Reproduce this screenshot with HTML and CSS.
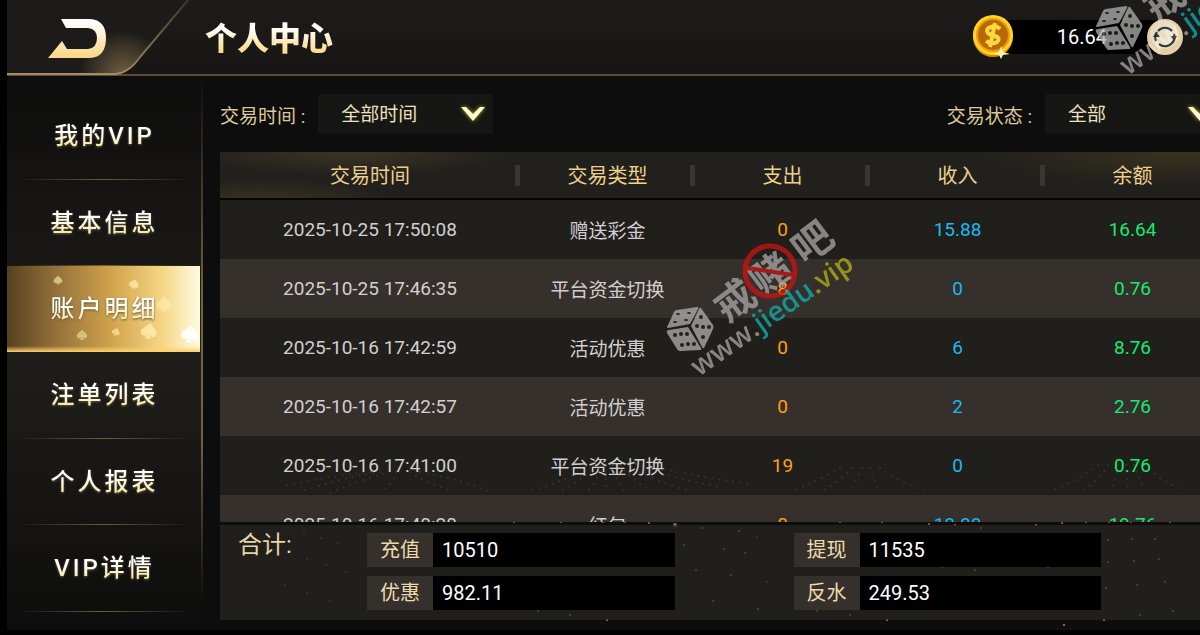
FILE: index.html
```
<!DOCTYPE html>
<html lang="zh-CN">
<head>
  <meta charset="UTF-8">
  <meta name="viewport" content="width=device-width, initial-scale=1">
  <title>个人中心</title>
  <link rel="stylesheet" href="styles.css">
</head>
<body>
  <div class="app">
    <header class="topbar">
      <button class="back" aria-label="返回">
        <svg width="188" height="76" viewBox="0 0 188 76">
          <defs>
            <linearGradient id="gold" x1="0" y1="0" x2="0" y2="1">
              <stop offset="0.1" stop-color="#fff"/>
              <stop offset="0.9" stop-color="#fbd88c"/>
            </linearGradient>
            <linearGradient id="edge" x1="0" y1="1" x2="1" y2="0">
              <stop offset="0.3" stop-color="#a58d63"/>
              <stop offset="1" stop-color="#3a342a"/>
            </linearGradient>
            <radialGradient id="glow" cx="116" cy="74" r="44" gradientUnits="userSpaceOnUse">
              <stop offset="0" stop-color="#8b744e" stop-opacity=".75"/>
              <stop offset="1" stop-color="#8b744e" stop-opacity="0"/>
            </radialGradient>
          </defs>
          <path d="M0 0H181L133 57Q122 73 108 74H0Z" fill="#1c1b19"/>
          <path d="M0 0H181L133 57Q122 73 108 74H0Z" fill="url(#glow)"/>
          <path d="M0 74H108Q122 73 133 57L181 0" fill="none" stroke="url(#edge)" stroke-width="2"/>
          <path d="M54 19H83Q99 20 99 38Q99 57 83 58H41L55 41L60 49H81Q90 48 90 38Q90 29 81 28H59Z" fill="url(#gold)"/>
        </svg>
      </button>
      <h1>个人中心</h1>
      <div class="wallet">
        <svg class="coin" width="44" height="44" viewBox="0 0 44 44">
          <circle cx="23" cy="22" r="20" fill="#d98a00"/>
          <circle cx="23" cy="20" r="20" fill="#ffd42a"/>
          <circle cx="23" cy="20" r="16" fill="#b9670b" stroke="#f29c0a" stroke-width="2"/>
          <path d="M30 14Q26 10 21 12Q15 14 18 18Q20 20 25 21Q31 23 27 27Q22 30 16 26M25 8L20 32" fill="none" stroke="#ffd93c" stroke-width="4"/>
          <path d="M31 31L33 37L40 39L33 40L31 44L29 40L23 39L29 37Z" fill="#fff0ae"/>
        </svg>
        <span class="balance">16.64</span>
        <button class="refresh" aria-label="刷新">
          <svg width="36" height="36" viewBox="0 0 36 36">
            <circle cx="18" cy="18" r="18" fill="#fce3b4"/>
            <circle cx="17" cy="16" r="14" fill="#fff5df"/>
            <path d="M11 12A9 9 0 0 1 25 12M27 15A9 9 0 0 1 24 25M25 24A9 9 0 0 1 12 25M9 22A9 9 0 0 1 10 13" fill="none" stroke="#3a3a38" stroke-width="2"/>
            <path d="M6 18L9 13L13 18ZM24 17L30 17L27 22Z" fill="#3a3a38"/>
          </svg>
        </button>
      </div>
    </header>

    <div class="main">
      <nav class="side">
        <a href="#"><span>我的VIP</span></a>
        <a href="#"><span>基本信息</span></a>
        <a href="#" class="active">
          <svg class="spades" viewBox="0 0 193 86" preserveAspectRatio="none">
            <defs>
              <path id="spade" d="M0 -8C3 -4 8 -2 8 2C8 6 3 7 1 4L3 8H-3L-1 4C-3 7 -8 6 -8 2C-8 -2 -3 -4 0 -8Z"/>
            </defs>
            <g fill="#fff3b5">
              <use href="#spade" transform="translate(51 14) scale(.55)" opacity=".6"/>
              <use href="#spade" transform="translate(127 18) rotate(15) scale(.6)" opacity=".7"/>
              <use href="#spade" transform="translate(157 38) scale(.95)" opacity=".55"/>
              <use href="#spade" transform="translate(75 69) scale(.65)" opacity=".5"/>
              <use href="#spade" transform="translate(109 66) rotate(20) scale(.5)" opacity=".6"/>
              <use href="#spade" transform="translate(142 65) rotate(10)" opacity=".7"/>
              <use href="#spade" transform="translate(183 68) rotate(12) scale(1.1)" fill="#fff" opacity=".9"/>
            </g>
          </svg>
          <span>账户明细</span>
        </a>
        <a href="#"><span>注单列表</span></a>
        <a href="#"><span>个人报表</span></a>
        <a href="#"><span>VIP详情</span></a>
      </nav>

      <main class="content">
        <!-- gold dust in the background -->
        <svg class="dust" width="1000" height="170" viewBox="0 0 1000 170">
          <g class="rays">
            <path d="M150 12Q110 16 64 26M160 12Q120 18 80 32M170 12Q140 20 110 33M190 12Q200 20 234 32M176 12Q176 22 160 31M200 12Q250 22 270 32"/>
            <path d="M370 5Q350 20 310 31M376 5Q364 20 340 31M382 5Q378 20 368 31M386 5L386 31M392 5Q396 20 404 31M400 5Q410 20 432 31M408 5Q430 20 466 30M416 4Q450 18 500 27M424 4Q470 16 530 24"/>
            <path d="M620 8Q600 20 572 31M632 8Q622 20 602 31M642 8L630 31M650 8L658 31M660 8Q676 20 704 31"/>
            <path d="M878 5Q860 20 830 31M888 5Q880 20 862 31M898 5L892 31M906 5L908 31M914 5L924 31M924 5Q940 20 964 31"/>
          </g>
          <g fill="#8a7040">
            <circle cx="252" cy="59" r="1"/><circle cx="294" cy="62" r="1"/><circle cx="341" cy="62" r="1"/><circle cx="383" cy="62" r="1"/>
            <circle cx="405" cy="62" r="1"/><circle cx="429" cy="63" r="1"/><circle cx="455" cy="65" r="2"/><circle cx="482" cy="68" r="1"/>
            <circle cx="464" cy="85" r="1"/><circle cx="443" cy="106" r="1"/><circle cx="476" cy="110" r="1"/><circle cx="519" cy="71" r="1"/>
            <circle cx="504" cy="89" r="1"/><circle cx="525" cy="93" r="1"/><circle cx="511" cy="115" r="1"/><circle cx="493" cy="141" r="1"/>
            <circle cx="582" cy="61" r="1"/><circle cx="620" cy="62" r="1"/><circle cx="662" cy="62" r="1"/><circle cx="709" cy="64" r="1"/>
            <circle cx="735" cy="65" r="1"/><circle cx="761" cy="68" r="1"/><circle cx="816" cy="65" r="1"/><circle cx="842" cy="63" r="1"/>
            <circle cx="866" cy="62" r="1"/><circle cx="889" cy="62" r="1"/><circle cx="911" cy="62" r="1"/><circle cx="950" cy="62" r="1"/>
            <circle cx="888" cy="80" r="1"/><circle cx="912" cy="79" r="1"/><circle cx="935" cy="79" r="1"/><circle cx="888" cy="102" r="1"/>
            <circle cx="914" cy="101" r="1"/><circle cx="939" cy="99" r="1"/><circle cx="886" cy="128" r="1"/><circle cx="917" cy="125" r="1"/>
            <circle cx="945" cy="122" r="1"/><circle cx="953" cy="151" r="1"/><circle cx="920" cy="155" r="1"/><circle cx="814" cy="149" r="1"/>
            <circle cx="722" cy="107" r="1"/><circle cx="755" cy="110" r="1"/><circle cx="828" cy="107" r="1"/><circle cx="538" cy="149" r="1"/>
            <circle cx="597" cy="151" r="1"/><circle cx="630" cy="155" r="1"/><circle cx="318" cy="151" r="1"/><circle cx="350" cy="155" r="1"/>
          </g>
          <g fill="#c58b35">
            <circle cx="387" cy="160" r="1"/><circle cx="667" cy="160" r="1"/><circle cx="884" cy="160" r="1"/><circle cx="844" cy="165" r="1"/>
          </g>
          <g fill="#4a4538">
            <circle cx="68" cy="68" r="1"/><circle cx="84" cy="73" r="1"/><circle cx="101" cy="78" r="1"/><circle cx="118" cy="83" r="1"/>
            <circle cx="87" cy="99" r="1"/><circle cx="106" cy="105" r="1"/><circle cx="126" cy="112" r="1"/><circle cx="65" cy="125" r="1"/>
            <circle cx="87" cy="133" r="1"/><circle cx="110" cy="141" r="1"/><circle cx="537" cy="77" r="1"/><circle cx="547" cy="122" r="1"/>
          </g>
        </svg>

        <form class="filters">
          <div class="filter">
            <label for="time">交易时间 :</label>
            <div class="dropdown">
              <select id="time">
                <option>全部时间</option>
                <option>今天</option>
                <option>昨天</option>
              </select>
              <svg class="chevron" width="24" height="16" viewBox="0 0 24 16"><path d="M0 1H5L12 8L19 1H24L12 15Z"/></svg>
            </div>
          </div>
          <div class="filter">
            <label for="state">交易状态 :</label>
            <div class="dropdown">
              <select id="state">
                <option>全部</option>
                <option>收入</option>
                <option>支出</option>
              </select>
              <svg class="chevron" width="24" height="16" viewBox="0 0 24 16"><path d="M0 1H5L12 8L19 1H24L12 15Z"/></svg>
            </div>
          </div>
        </form>

        <div class="records">
          <table>
            <colgroup>
              <col class="wide"><col><col><col><col>
            </colgroup>
            <thead>
              <tr><th>交易时间</th><th>交易类型</th><th>支出</th><th>收入</th><th>余额</th></tr>
            </thead>
            <tbody>
              <tr><td>2025-10-25 17:50:08</td><td>赠送彩金</td><td class="out">0</td><td class="in">15.88</td><td class="left">16.64</td></tr>
              <tr><td>2025-10-25 17:46:35</td><td>平台资金切换</td><td class="out">8</td><td class="in">0</td><td class="left">0.76</td></tr>
              <tr><td>2025-10-16 17:42:59</td><td>活动优惠</td><td class="out">0</td><td class="in">6</td><td class="left">8.76</td></tr>
              <tr><td>2025-10-16 17:42:57</td><td>活动优惠</td><td class="out">0</td><td class="in">2</td><td class="left">2.76</td></tr>
              <tr><td>2025-10-16 17:41:00</td><td>平台资金切换</td><td class="out">19</td><td class="in">0</td><td class="left">0.76</td></tr>
              <tr><td>2025-10-16 17:40:20</td><td>红包</td><td class="out">0</td><td class="in">18.88</td><td class="left">19.76</td></tr>
            </tbody>
          </table>
        </div>

        <section class="totals">
          <h2>合计:</h2>
          <dl>
            <div><dt>充值</dt><dd>10510</dd></div>
            <div><dt>优惠</dt><dd>982.11</dd></div>
          </dl>
          <dl>
            <div><dt>提现</dt><dd>11535</dd></div>
            <div><dt>反水</dt><dd>249.53</dd></div>
          </dl>
        </section>
      </main>
    </div>

    <svg class="mark mark-center" width="200" height="170" viewBox="0 0 200 170">
      <g id="mark">
        <g fill="#b0b0b0">
          <path d="M17 100L37 97Q39 97 38 99L30 114L8 118Q6 118 8 115L14 102Q15 100 17 100Z"/>
          <path d="M9 120L28 117L41 138Q42 140 40 140L20 141Q18 141 17 139L7 123Q6 120 9 120Z"/>
          <path d="M41 98L53 115Q54 117 53 119L44 138Q43 139 42 137L31 116L39 99Q40 97 41 98Z"/>
        </g>
        <g fill="#24231f">
          <ellipse cx="18" cy="104" rx="2" ry="1"/><ellipse cx="29" cy="103" rx="2" ry="1"/><ellipse cx="15" cy="112" rx="2" ry="1"/><ellipse cx="26" cy="110" rx="2" ry="1"/>
          <circle cx="15" cy="125" r="2"/><circle cx="21" cy="124" r="2"/><circle cx="27" cy="124" r="2"/><circle cx="22" cy="135" r="2"/><circle cx="28" cy="134" r="2"/><circle cx="34" cy="134" r="2"/>
          <circle cx="41" cy="107" r="2"/><circle cx="37" cy="116" r="2"/><circle cx="43" cy="117" r="2"/><circle cx="49" cy="117" r="2"/><circle cx="43" cy="127" r="2"/>
        </g>
        <g transform="rotate(-37 75 91)" class="mark-name">
          <text x="75" y="105">戒</text>
          <text x="120" y="105">赌</text>
          <text x="172" y="105">吧</text>
        </g>
        <circle cx="110" cy="61" r="25" fill="none" stroke="#cc1414" stroke-width="5"/>
        <path d="M87 58L133 65" stroke="#cc1414" stroke-width="4"/>
        <text class="mark-url" transform="translate(39 167) rotate(-35)"><tspan fill="#a8a8a8">www.</tspan><tspan fill="#0cb4b4">jiedu</tspan><tspan fill="#b4b414">.vip</tspan></text>
      </g>
    </svg>
    <svg class="mark mark-corner" width="200" height="170" viewBox="0 0 200 170"><use href="#mark"/></svg>
  </div>
</body>
</html>
```
FILE: styles.css
```
* { box-sizing: border-box; }
body { margin: 0; background: #000; color: #d2cfd0; font-family: Roboto, "Noto Sans CJK SC", sans-serif; font-size: 19px; }
h1, h2, dl, dd { margin: 0; }
button { border: 0; padding: 0; background: none; cursor: pointer; }
svg { display: block; }

.app { position: relative; display: flex; flex-direction: column; min-height: 100vh; padding: 0 0 5px 7px; overflow: hidden; }

.topbar { display: flex; height: 76px; background: linear-gradient(#1d1c1b, #171614); border-bottom: 2px solid #5c4e36; }
.back { width: 188px; height: 76px; }
h1 { margin-left: 10px; line-height: 72px; font-family: "Noto Sans CJK SC", sans-serif; font-size: 32px; font-weight: 900; color: transparent; background: linear-gradient(#fff 38%, #fbdc90 68%); background-clip: text; -webkit-background-clip: text; }
.wallet { display: flex; align-items: center; align-self: center; height: 34px; margin: 0 17px 0 auto; }
.coin { margin-right: -21px; z-index: 1; }
.balance { width: 172px; height: 34px; padding-right: 58px; background: #000; color: #fff; font-size: 20px; line-height: 34px; text-align: right; }
.refresh { position: relative; z-index: 3; margin-left: -18px; opacity: .9; }

.main { flex: 1; display: flex; background: #0d0d0d; }

.side { flex: none; width: 196px; display: flex; flex-direction: column; padding: 17px 1px 18px 0; background: linear-gradient(#0d0d0d, #201e1a 50%, #0d0d0d) padding-box; border-right: 2px solid; border-image: linear-gradient(#0d0d0d, #75633f 40%, #75633f 65%, #0d0d0d 95%) 1; }
.side a { position: relative; flex: 1; display: flex; align-items: center; justify-content: center; text-decoration: none; border-bottom: 1px solid; border-image: linear-gradient(90deg, transparent 5%, #6d5b3b 50%, transparent 95%) 1; }
.side span { position: relative; padding-left: 2px; font-size: 24px; font-weight: 500; letter-spacing: 3px; line-height: 36px; color: transparent; background: linear-gradient(#fff 40%, #f5e7a8 80%); background-clip: text; -webkit-background-clip: text; filter: drop-shadow(0 1px 1px #665a38); }
.side .active { border: 0; background: linear-gradient(transparent 93%, #ffd06a), linear-gradient(90deg, #57401f, #93703a 25%, #d3a44e 55%, #f5d583 80%, #fffbe0); }
.spades { position: absolute; inset: 0; width: 100%; height: 100%; }

.content { position: relative; flex: 1; display: flex; flex-direction: column; margin: 0 -20px 0 17px; padding: 18px 0 10px; }
.dust { position: absolute; left: 0; bottom: 0; }
.rays { fill: none; stroke: #4c422a; stroke-width: 2; stroke-linecap: round; stroke-dasharray: 0 7; }

.filters { display: flex; justify-content: space-between; margin-bottom: 18px; color: #dcc89b; }
.filter { display: flex; align-items: center; gap: 13px; }
.dropdown { position: relative; width: 175px; }
.dropdown select { width: 100%; height: 40px; padding: 0 23px; appearance: none; border: 0; border-radius: 3px; background: #161614; color: #ece0bd; font: inherit; }
.chevron { position: absolute; right: 8px; top: 12px; fill: #fffbd0; filter: drop-shadow(0 0 2px #b5aa20); pointer-events: none; }

.records { position: relative; flex: 1 1 0; min-height: 200px; overflow: hidden; }
table { width: 100%; table-layout: fixed; border-collapse: separate; border-spacing: 0; }
col { width: 17.5%; }
col.wide { width: 30%; }
th { position: relative; height: 48px; padding: 0 0 2px; border-bottom: 2px solid #060606; font-size: 20px; font-weight: 400; color: #ecd08b; }
th:not(:last-child)::after { content: ""; position: absolute; right: 0; top: 13px; width: 5px; height: 21px; background: #383734; }
thead tr { background: radial-gradient(ellipse 160px 24px at 13% 0, #3d3524, transparent), radial-gradient(ellipse 130px 22px at 4% 100%, #39321f, transparent), radial-gradient(ellipse 200px 34px at 96% 0, #39321f, transparent), #22201d; }
td { height: 59px; padding: 0; text-align: center; }
tbody tr { background: rgba(45, 43, 37, .6); }
tbody tr:nth-child(even) { background: #35302b; }
.out { color: #ff9f1a; }
.in { color: #18b9f2; }
.left { color: #19e873; }

.totals { position: relative; display: flex; margin-top: 3px; padding: 8px 119px 10px 18px; background: rgba(45, 43, 37, .6); }
h2 { width: 129px; font-size: 24px; font-weight: 400; line-height: 24px; color: #e5d5a6; }
dl { flex: 1; display: grid; gap: 9px; }
dl + dl { margin-left: 119px; }
dl div { display: flex; line-height: 34px; font-size: 20px; }
dt { width: 66px; text-align: center; background: #35302b; color: #eddaae; }
dd { flex: 1; padding-left: 9px; background: #000; color: #fff; }

.mark { position: absolute; z-index: 2; opacity: .75; overflow: visible; pointer-events: none; }
.mark-center { left: 660px; top: 210px; }
.mark-corner { left: 1089px; top: -91px; }
.mark-name { font-family: "Noto Sans CJK SC", sans-serif; font-size: 40px; font-weight: 700; fill: #a8a8a8; text-anchor: middle; }
.mark-url { font-family: "Open Sans", sans-serif; font-size: 28px; font-weight: 600; }
```
